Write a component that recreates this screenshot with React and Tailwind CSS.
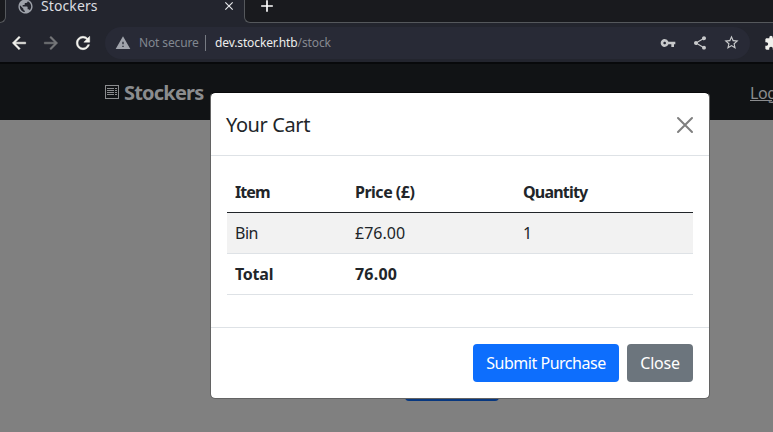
import React from "react";
import { MdPublic, MdClose, MdAdd, MdWarning, MdVpnKey, MdShare, MdStarBorder, MdExtension } from "react-icons/md";

function TabStrip() {
  return (
    <div className="flex h-[23px] shrink-0 bg-[#23252e]">
      <div className="w-[6px] shrink-0 rounded-br-[6px] border-r border-b border-[#55585c] bg-[#191a1e]" />
      <div className="flex h-3 w-[238px] shrink-0 items-center pl-[11px] pr-2">
        <MdPublic className="size-[17px] shrink-0 text-[#9ea2aa]" />
        <span className="ml-[7px] text-[14px] leading-3 tracking-[0.1px] text-[#dcdde0]">Stockers</span>
        <MdClose className="ml-auto size-[14px] shrink-0 text-[#e8eaed]" />
      </div>
      <div className="min-w-0 flex-1 rounded-bl-[6px] border-b border-l border-[#55585c] bg-[#191a1e] pl-[12px]">
        <MdAdd className="-mt-[4px] size-5 text-white" />
      </div>
    </div>
  );
}

function NavIcon({ d, className }) {
  return (
    <svg viewBox="0 0 24 24" className={className} fill="currentColor" stroke="currentColor" strokeWidth="0.6">
      <path d={d} />
    </svg>
  );
}

const BACK = "M20 11H7.83l5.59-5.59L12 4l-8 8 8 8 1.41-1.41L7.83 13H20v-2z";
const FORWARD = "M12 4l-1.41 1.41L16.17 11H4v2h12.17l-5.58 5.59L12 20l8-8z";
const RELOAD =
  "M17.65 6.35C16.2 4.9 14.21 4 12 4c-4.42 0-7.99 3.58-7.99 8s3.57 8 7.99 8c3.73 0 6.84-2.55 7.73-6h-2.08c-.82 2.33-3.04 4-5.65 4-3.31 0-6-2.69-6-6s2.69-6 6-6c1.66 0 3.14.69 4.22 1.78L13 11h7V4l-2.35 2.35z";

function Toolbar() {
  return (
    <div className="flex h-[41px] shrink-0 items-center border-b-2 border-[#08090b] bg-[#23252e] pl-[9px]">
      <NavIcon d={BACK} className="size-5 shrink-0 text-[#f3f3ee]" />
      <NavIcon d={FORWARD} className="ml-3 size-5 shrink-0 text-[#77787b]" />
      <NavIcon d={RELOAD} className="ml-3 size-5 shrink-0 text-[#f3f3ee]" />
      <div className="ml-[12px] flex h-8 w-[645px] shrink-0 items-center rounded-full bg-[#282a36] pl-[10px] pr-[10px] text-[12px]">
        <MdWarning className="size-4 shrink-0 text-[#a0a3ab]" />
        <span className="ml-[8px] w-[60px] tracking-[-0.13px] whitespace-nowrap text-[#818790]">Not secure</span>
        <span className="ml-[6px] h-4 w-px bg-[#777b83]" />
        <span className="ml-[9px] tracking-[-0.12px] whitespace-nowrap text-[#eeeeed]">
          dev.stocker.htb<span className="text-[#858890]">/stock</span>
        </span>
        <MdVpnKey className="ml-auto size-4 text-[#c8c9cb]" />
        <MdShare className="ml-4 size-4 text-[#c8c9cb]" />
        <MdStarBorder className="ml-[15px] size-[17px] text-[#c8c9cb]" />
      </div>
      <MdExtension className="ml-[14px] size-4 shrink-0 text-[#f0f0ec]" />
    </div>
  );
}

function PaperIcon() {
  return (
    <svg className="shrink-0" width="14" height="14" viewBox="0 0 14 14" fill="none" stroke="#8b8c8e" shapeRendering="crispEdges">
      <path d="M.5 .5h13v13H.5zM2 3.5h7M10 3.5h2M2 5.5h7M10 5.5h2M2 7.5h7M10 7.5h2M2 9.5h7M10 9.5h2" />
    </svg>
  );
}

function CartTable() {
  return (
    <div className="grid grid-cols-[120px_168px_178px] text-[16px] leading-6 [&>*]:h-[41px] [&>*]:border-b [&>*]:px-2 [&>*]:py-2">
      <strong className="border-[#212529] tracking-[-0.9px]">Item</strong>
      <strong className="border-[#212529] tracking-[-0.5px]">Price (£)</strong>
      <strong className="border-[#212529] tracking-[-0.8px]">Quantity</strong>
      <span className="border-[#dee2e6] bg-[#f2f2f2] tracking-[-0.5px]">Bin</span>
      <span className="border-[#dee2e6] bg-[#f2f2f2]">£76.00</span>
      <span className="border-[#dee2e6] bg-[#f2f2f2]">1</span>
      <strong className="border-[#dee2e6] tracking-[-0.25px]">Total</strong>
      <strong className="border-[#dee2e6] tracking-[0.2px]">76.00</strong>
      <span className="border-[#dee2e6]" />
    </div>
  );
}

function CartModal() {
  return (
    <div className="absolute top-[92px] left-[210px] flex h-[307px] w-[500px] flex-col rounded-[5px] border border-[#636363] border-t-[#08090a] bg-white bg-clip-padding text-[#212529]">
      <div className="flex h-[63px] items-center justify-between border-b border-[#dee2e6] pt-px pr-[15px] pl-[15px]">
        <h5 className="text-[20px] leading-[30px] tracking-[-0.4px]">Your Cart</h5>
        <svg width="18" height="18" viewBox="0 0 18 18" stroke="#7f7f7f" strokeWidth="2" strokeLinecap="round">
          <path d="M2 2l14 14M16 2L2 16" />
        </svg>
      </div>
      <div className="h-[171px] px-4 pt-4">
        <CartTable />
      </div>
      <div className="flex flex-1 items-center justify-end gap-2 border-t border-[#dee2e6] pr-4 text-[16px] leading-6 text-white">
        <button className="h-[38px] w-[146px] rounded-[4px] bg-[#0d6efd] tracking-[-0.48px] whitespace-nowrap">Submit Purchase</button>
        <button className="h-[38px] w-[66px] rounded-[4px] bg-[#6c757d] tracking-[-0.25px]">Close</button>
      </div>
    </div>
  );
}

export default function App() {
  return (
    <div className="relative flex h-[432px] w-[773px] flex-col overflow-hidden bg-[#808080] font-['Noto_Sans',sans-serif]">
      <TabStrip />
      <Toolbar />
      <nav className="flex h-[56px] shrink-0 items-center bg-[#111315] pl-[105px] text-[#8b8c8e]">
        <PaperIcon />
        <span className="mt-px ml-[5px] w-[80px] shrink-0 text-[20px] leading-[30px] font-bold tracking-[-0.8px]">Stockers</span>
        <span className="mt-px ml-[546px] text-[16px] tracking-[-0.4px] whitespace-nowrap underline">Login</span>
      </nav>
      <main className="flex flex-1 flex-col items-start pl-[405px]">
        <div className="mt-[243px] h-[38px] w-[94px] rounded-[4px] bg-[#07377f]" />
      </main>
      <CartModal />
    </div>
  );
}
